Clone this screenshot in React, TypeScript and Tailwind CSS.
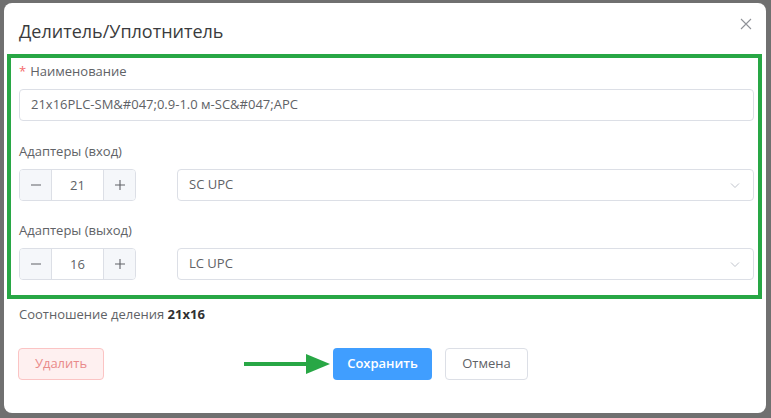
import { useState } from "react";

const font = { fontFamily: '"Open Sans", "Noto Sans", sans-serif' };

function Stepper({ value }: { value: number }) {
  return (
    <div className="flex h-[32px] w-[117px] rounded-[4px] border border-[#dcdfe6] overflow-hidden">
      <div className="w-[32px] flex items-center justify-center bg-[#f5f7fa] border-r border-[#dcdfe6] text-[#606266]">
        <svg width="12" height="12" viewBox="0 0 12 12">
          <path d="M1 6h10" stroke="currentColor" strokeWidth="1.1" />
        </svg>
      </div>
      <div className="flex-1 flex items-center justify-center text-[13px] text-[#606266] pt-[1px]">
        {value}
      </div>
      <div className="w-[32px] flex items-center justify-center bg-[#f5f7fa] border-l border-[#dcdfe6] text-[#606266]">
        <svg width="12" height="12" viewBox="0 0 12 12">
          <path d="M1 6h10M6 1v10" stroke="currentColor" strokeWidth="1.1" />
        </svg>
      </div>
    </div>
  );
}

function Select({ value }: { value: string }) {
  return (
    <div className="flex-1 h-[32px] rounded-[4px] border border-[#dcdfe6] flex items-center justify-between pl-[11px] pr-[12px]">
      <span className="text-[13px] text-[#606266]">{value}</span>
      <svg width="12" height="12" viewBox="0 0 12 12" className="text-[#c0c4cc]">
        <path d="M2 4.5l4 4 4-4" fill="none" stroke="currentColor" strokeWidth="1" />
      </svg>
    </div>
  );
}

export default function App() {
  const [name] = useState("21x16PLC-SM&#047;0.9-1.0 м-SC&#047;APC");

  return (
    <div className="h-[418px] bg-[#707070] pt-[3px] pl-[4px]" style={font}>
      <div className="relative w-[762px] h-[410px] bg-white rounded-[8px]">
        {/* HEADER */}
        <div className="h-[51px] px-[15px] pt-[16px]">
          <div className="text-[18px] leading-[24px] text-[#3a3b3d]">Делитель/Уплотнитель</div>
        </div>
        <button className="absolute top-[15px] right-[14px] text-[#909399]">
          <svg width="12" height="12" viewBox="0 0 12 12">
            <path d="M1 1l10 10M11 1L1 11" stroke="currentColor" strokeWidth="1.1" />
          </svg>
        </button>

        {/* FORM */}
        <div className="ml-[3px] w-[755px] border-[4px] border-[#28a745] pl-[8px] pr-[4px] pt-[3px] pb-[15px]">
          <div className="text-[13px] leading-[20px] text-[#606266] mb-[8px]">
            <span className="text-[#f56c6c] mr-[4px]">*</span>Наименование
          </div>
          <div className="h-[32px] rounded-[4px] border border-[#dcdfe6] flex items-center px-[11px] text-[13px] text-[#606266]">
            {name}
          </div>

          <div className="text-[13px] leading-[20px] text-[#606266] mt-[20px] mb-[8px]">
            Адаптеры (вход)
          </div>
          <div className="flex gap-[41px]">
            <Stepper value={21} />
            <Select value="SC UPC" />
          </div>

          <div className="text-[13px] leading-[20px] text-[#606266] mt-[19px] mb-[8px]">
            Адаптеры (выход)
          </div>
          <div className="flex gap-[41px]">
            <Stepper value={16} />
            <Select value="LC UPC" />
          </div>
        </div>

        <div className="pl-[15px] mt-[5px] text-[13px] leading-[20px] text-[#606266]">
          Соотношение деления <b className="text-[#303133]">21x16</b>
        </div>

        {/* BUTTONS */}
        <div className="flex items-center pl-[14px] mt-[24px]">
          <button className="w-[86px] h-[32px] rounded-[4px] border border-[#fbc4c4] bg-[#fef0f0] text-[13px] text-[#e98a8a]">
            Удалить
          </button>
          <svg width="88" height="24" viewBox="0 0 88 24" className="ml-[140px]">
            <path d="M0 12h64" stroke="#28a745" strokeWidth="4" strokeLinecap="round" />
            <path d="M62 2l24 10-24 10z" fill="#28a745" />
          </svg>
          <button className="ml-[1px] w-[99px] h-[32px] rounded-[4px] bg-[#409eff] text-[13px] font-semibold text-white">
            Сохранить
          </button>
          <button className="ml-[13px] w-[83px] h-[32px] rounded-[4px] border border-[#dcdfe6] bg-white text-[13px] text-[#606266]">
            Отмена
          </button>
        </div>
      </div>
    </div>
  );
}
